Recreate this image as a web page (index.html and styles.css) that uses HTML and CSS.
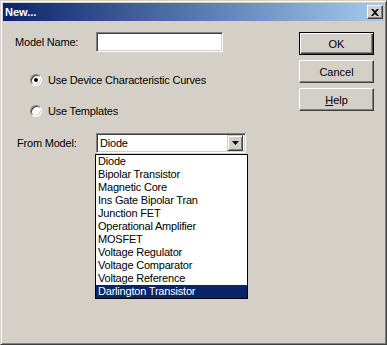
FILE: index.html
```html
<!DOCTYPE html>
<html lang="en">
<head>
  <meta charset="UTF-8">
  <title>New...</title>
  <link rel="stylesheet" href="styles.css">
</head>
<body>
  <div class="window">
    <div class="titlebar">
      <span class="title">New...</span>
      <button class="close-btn" type="button">
        <svg width="8" height="7" viewBox="0 0 8 7">
          <path d="M0 0h2l2 2 2-2h2L5 3.5 8 7H6L4 5 2 7H0l3-3.5z" fill="#000"/>
        </svg>
      </button>
    </div>

    <div class="content">
      <form class="form-area">
        <div class="row">
          <label class="label" for="model-name">Model Name:</label>
          <input class="textbox" type="text" id="model-name">
        </div>

        <div class="radio-row first">
          <span class="radio checked"></span>
          <span>Use Device Characteristic Curves</span>
        </div>
        <div class="radio-row">
          <span class="radio"></span>
          <span>Use Templates</span>
        </div>

        <div class="row combo-row">
          <span class="label from-label">From Model:</span>
          <div class="combo">
            <span class="combo-text">Diode</span>
            <span class="combo-btn">
              <svg width="7" height="4" viewBox="0 0 7 4"><path d="M0 0h7L3.5 4z" fill="#000"/></svg>
            </span>
            <ul class="dropdown">
              <li>Diode</li>
              <li>Bipolar Transistor</li>
              <li>Magnetic Core</li>
              <li>Ins Gate Bipolar Tran</li>
              <li>Junction FET</li>
              <li>Operational Amplifier</li>
              <li>MOSFET</li>
              <li>Voltage Regulator</li>
              <li>Voltage Comparator</li>
              <li>Voltage Reference</li>
              <li class="selected">Darlington Transistor</li>
            </ul>
          </div>
        </div>
      </form>

      <div class="buttons">
        <button class="btn default" type="button">OK</button>
        <button class="btn" type="button">Cancel</button>
        <button class="btn" type="button"><u>H</u>elp</button>
      </div>
    </div>
  </div>
</body>
</html>
```

FILE: styles.css
```css
/* Classic dialog */
body {
  margin: 0;
  padding: 0;
  font-family: 'Liberation Sans', Arial, sans-serif;
  font-size: 11px;
  letter-spacing: -0.2px;
  color: #000;
  background: #d4d0c8;
}

.window {
  width: 387px;
  height: 345px;
  box-sizing: border-box;
  padding: 2px;
  background: #d4d0c8;
  border: 1px solid;
  border-color: #d4d0c8 #404040 #404040 #d4d0c8;
  box-shadow: inset 1px 1px #fff, inset -1px -1px #808080;
}

.titlebar {
  height: 18px;
  display: flex;
  align-items: center;
  justify-content: space-between;
  padding: 0 1px 0 2px;
  background: linear-gradient(to right, #0a246a, #a6caf0);
}

.title {
  color: #fff;
  font-weight: bold;
  font-size: 11px;
  letter-spacing: 0;
}

.close-btn {
  width: 16px;
  height: 14px;
  padding: 0;
  display: flex;
  align-items: center;
  justify-content: center;
  background: #d4d0c8;
  border: 1px solid;
  border-color: #fff #404040 #404040 #fff;
  box-shadow: inset -1px -1px #808080;
}

.content {
  display: flex;
  justify-content: space-between;
  padding: 11px 10px 0 12px;
}

.form-area {
  margin: 0;
  width: 250px;
}

.row {
  display: flex;
  align-items: center;
  height: 20px;
}

.label {
  width: 81px;
}

.from-label {
  padding-left: 2px;
  width: 79px;
}

.textbox {
  width: 127px;
  height: 20px;
  box-sizing: border-box;
  margin: 0;
  padding: 0 3px;
  font: inherit;
  background: #fff;
  border: 1px solid;
  border-color: #808080 #fff #fff #808080;
  box-shadow: inset 1px 1px #404040, inset -1px -1px #d4d0c8;
  outline: none;
}

.radio-row {
  display: flex;
  align-items: center;
  gap: 6px;
  height: 12px;
  margin: 19px 0 0 15px;
}

.radio-row.first {
  margin-top: 22px;
}

.radio {
  width: 12px;
  height: 12px;
  box-sizing: border-box;
  border-radius: 50%;
  background: #fff;
  border: 1px solid;
  border-color: #808080 #fff #fff #808080;
  box-shadow: inset 1px 1px #404040, inset -1px -1px #d4d0c8;
  position: relative;
}

.radio.checked::after {
  content: "";
  position: absolute;
  left: 3px;
  top: 3px;
  width: 4px;
  height: 4px;
  border-radius: 50%;
  background: #000;
}

.combo-row {
  margin-top: 16px;
}

.combo {
  position: relative;
  width: 150px;
  height: 20px;
  box-sizing: border-box;
  display: flex;
  align-items: center;
  justify-content: space-between;
  background: #fff;
  border: 1px solid;
  border-color: #808080 #fff #fff #808080;
  box-shadow: inset 1px 1px #404040, inset -1px -1px #d4d0c8;
  padding: 2px;
}

.combo-text {
  padding-left: 1px;
}

.combo-btn {
  width: 16px;
  height: 16px;
  box-sizing: border-box;
  display: flex;
  align-items: center;
  justify-content: center;
  background: #d4d0c8;
  border: 1px solid;
  border-color: #d4d0c8 #404040 #404040 #d4d0c8;
  box-shadow: inset 1px 1px #fff, inset -1px -1px #808080;
}

/* open list drops over the dialog */
.dropdown {
  position: absolute;
  left: -2px;
  top: 20px;
  width: 153px;
  box-sizing: border-box;
  margin: 0;
  padding: 0;
  list-style: none;
  background: #fff;
  border: 1px solid #000;
}

.dropdown li {
  height: 13px;
  line-height: 13px;
  padding-left: 2px;
  white-space: nowrap;
}

.dropdown li.selected {
  background: #0a246a;
  color: #fff;
}

.buttons {
  display: flex;
  flex-direction: column;
  gap: 5px;
}

.btn {
  width: 75px;
  height: 23px;
  margin: 0;
  padding: 0;
  font: inherit;
  color: #000;
  background: #d4d0c8;
  border: 1px solid;
  border-color: #fff #404040 #404040 #fff;
  box-shadow: inset -1px -1px #808080;
}

.btn.default {
  border: 1px solid #000;
  box-shadow: inset 1px 1px #fff, inset -1px -1px #404040, inset -2px -2px #808080;
}
```
